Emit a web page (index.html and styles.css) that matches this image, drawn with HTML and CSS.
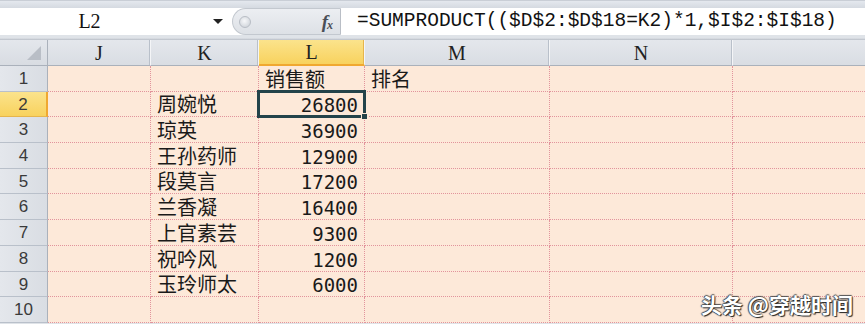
FILE: index.html
```
<!DOCTYPE html>
<html lang="zh-CN">
<head>
  <meta charset="UTF-8">
  <title>SUMPRODUCT 排名</title>
  <link rel="stylesheet" href="styles.css">
</head>
<body>
  <div class="window">
    <div class="top-strip"></div>

    <!-- 名称框 + 编辑栏 -->
    <div class="formula-bar">
      <div class="name-box">
        <span class="name">L2</span>
        <span class="arrow"></span>
      </div>
      <div class="fx-area">
        <span class="grip"></span>
        <span class="fx">f<sub>x</sub></span>
      </div>
      <div class="formula">=SUMPRODUCT(($D$2:$D$18=K2)*1,$I$2:$I$18)</div>
    </div>
    <div class="bar-gap"></div>

    <div class="sheet">
      <div class="corner"><span class="corner-tri"></span></div>
      <div class="col-head">J</div>
      <div class="col-head">K</div>
      <div class="col-head active">L</div>
      <div class="col-head">M</div>
      <div class="col-head">N</div>
      <div class="col-head last"></div>

      <div class="row-head">1</div>
      <div class="cell"></div>
      <div class="cell"></div>
      <div class="cell text">销售额</div>
      <div class="cell text">排名</div>
      <div class="cell"></div>
      <div class="cell last"></div>

      <div class="row-head active">2</div>
      <div class="cell"></div>
      <div class="cell text">周婉悦</div>
      <div class="cell num selected">26800<span class="handle"></span></div>
      <div class="cell"></div>
      <div class="cell"></div>
      <div class="cell last"></div>

      <div class="row-head">3</div>
      <div class="cell"></div>
      <div class="cell text">琼英</div>
      <div class="cell num">36900</div>
      <div class="cell"></div>
      <div class="cell"></div>
      <div class="cell last"></div>

      <div class="row-head">4</div>
      <div class="cell"></div>
      <div class="cell text">王孙药师</div>
      <div class="cell num">12900</div>
      <div class="cell"></div>
      <div class="cell"></div>
      <div class="cell last"></div>

      <div class="row-head">5</div>
      <div class="cell"></div>
      <div class="cell text">段莫言</div>
      <div class="cell num">17200</div>
      <div class="cell"></div>
      <div class="cell"></div>
      <div class="cell last"></div>

      <div class="row-head">6</div>
      <div class="cell"></div>
      <div class="cell text">兰香凝</div>
      <div class="cell num">16400</div>
      <div class="cell"></div>
      <div class="cell"></div>
      <div class="cell last"></div>

      <div class="row-head">7</div>
      <div class="cell"></div>
      <div class="cell text">上官素芸</div>
      <div class="cell num">9300</div>
      <div class="cell"></div>
      <div class="cell"></div>
      <div class="cell last"></div>

      <div class="row-head">8</div>
      <div class="cell"></div>
      <div class="cell text">祝吟风</div>
      <div class="cell num">1200</div>
      <div class="cell"></div>
      <div class="cell"></div>
      <div class="cell last"></div>

      <div class="row-head">9</div>
      <div class="cell"></div>
      <div class="cell text">玉玲师太</div>
      <div class="cell num">6000</div>
      <div class="cell"></div>
      <div class="cell"></div>
      <div class="cell last"></div>

      <div class="row-head">10</div>
      <div class="cell"></div>
      <div class="cell"></div>
      <div class="cell"></div>
      <div class="cell"></div>
      <div class="cell"></div>
      <div class="cell last"></div>
    </div>

    <!-- 水印 -->
    <div class="watermark">头条 @穿越时间</div>
  </div>
</body>
</html>
```
FILE: styles.css
```
* {
  margin: 0;
  padding: 0;
  box-sizing: border-box;
}

body {
  background-color: #dfe3e8;
  font-family: "Liberation Sans", Arial, sans-serif;
  overflow: hidden;
}

.window {
  position: relative;
  width: 865px;
  height: 324px;
  overflow: hidden;
}

.top-strip {
  height: 8px;
  background: linear-gradient(#e4e8ee, #d5dae1);
  border-top: 1px solid #c9ced6;
}

/* 编辑栏 */
.formula-bar {
  display: flex;
  height: 27px;
  background-color: #ffffff;
}

.name-box {
  width: 232px;
  display: flex;
  align-items: center;
}

.name {
  flex: 1;
  text-align: center;
  font-family: "Liberation Serif", serif;
  font-size: 20px;
  color: #111;
  padding-left: 6px;
}

.arrow {
  width: 0;
  height: 0;
  border-left: 5px solid transparent;
  border-right: 5px solid transparent;
  border-top: 5px solid #222;
  margin-right: 9px;
  margin-left: 40px;
}

.fx-area {
  width: 109px;
  display: flex;
  align-items: center;
  justify-content: space-between;
  background: linear-gradient(#eceef2, #dde1e6);
  border: 1px solid #c3c8cf;
  border-right: 1px solid #b9bec6;
  border-radius: 14px 0 0 14px;
  padding: 0 8px 0 6px;
}

.grip {
  width: 12px;
  height: 12px;
  border-radius: 50%;
  background: radial-gradient(circle at 45% 40%, #f7f8fa, #c7ccd3);
  border: 1px solid #b8bdc5;
}

.fx {
  font-family: "Liberation Serif", serif;
  font-style: italic;
  font-weight: bold;
  font-size: 19px;
  color: #4a4f57;
  letter-spacing: -1px;
}

.fx sub {
  font-size: 12px;
  vertical-align: -1px;
}

.formula {
  flex: 1;
  font-family: "Liberation Mono", monospace;
  font-size: 19.5px;
  color: #111;
  padding-left: 16px;
  line-height: 27px;
  white-space: nowrap;
}

.bar-gap {
  height: 5px;
  background: linear-gradient(#dfe3e8 60%, #b8bec7);
}

/* 表格 */
.sheet {
  display: grid;
  grid-template-columns: 48px 103px 108px 106px 185px 183px 1fr;
  grid-template-rows: 26px;
  grid-auto-rows: 25.7px;
  background-color: #fde9d9;
}

.corner {
  background: linear-gradient(#e4e7ec, #d8dce2);
  border-right: 1px solid #aab1bb;
  border-bottom: 1px solid #aab1bb;
  position: relative;
}

.corner-tri {
  position: absolute;
  right: 6px;
  bottom: 5px;
  width: 0;
  height: 0;
  border-left: 14px solid transparent;
  border-bottom: 14px solid #b9bec6;
}

.col-head {
  background: linear-gradient(#e4e7ec, #d9dde3);
  border-right: 1px solid #f4f5f7;
  border-bottom: 1px solid #aab1bb;
  box-shadow: inset -1px 0 0 #b9c0ca;
  text-align: center;
  font-family: "Liberation Serif", serif;
  font-size: 20px;
  line-height: 26px;
  color: #222;
}

.col-head.active {
  background: linear-gradient(#fbe38c, #f8d25e);
  border-bottom: 2px solid #f0a830;
  box-shadow: inset -1px 0 0 #e6b54c;
  line-height: 25px;
}

.col-head.last {
  border-right: none;
  box-shadow: none;
}

.row-head {
  background: linear-gradient(90deg, #e4e7ec, #d9dde3);
  border-right: 1px solid #aab1bb;
  border-bottom: 1px solid #b9c0ca;
  text-align: center;
  font-size: 17px;
  line-height: 25px;
  color: #3a3a3a;
}

.row-head.active {
  background: linear-gradient(#fbe38c, #f8d25e);
  border-right: 2px solid #f0a830;
  border-bottom: 1px solid #e6b54c;
}

.cell {
  border-right: 1px dotted #e2949c;
  border-bottom: 1px dotted #e2949c;
  display: flex;
  align-items: flex-end;
  color: #1a1a1a;
  white-space: nowrap;
}

.cell.last {
  border-right: none;
}

.text {
  font-family: "Noto Sans CJK SC", sans-serif;
  font-size: 20px;
  line-height: 22px;
  padding-left: 6px;
  padding-bottom: 1px;
}

.num {
  justify-content: flex-end;
  font-family: "DejaVu Sans Mono", monospace;
  font-size: 19px;
  line-height: 22px;
  padding-right: 6px;
}

/* 选中单元格 */
.selected {
  position: relative;
}

.selected::after {
  content: "";
  position: absolute;
  left: -2px;
  top: -2px;
  right: -2px;
  bottom: -2px;
  border: 3px solid #23434a;
}

.handle {
  position: absolute;
  right: -4px;
  bottom: -4px;
  width: 7px;
  height: 7px;
  background-color: #23434a;
  border: 1px solid #fde9d9;
  z-index: 1;
}

.watermark {
  position: absolute;
  right: 12px;
  bottom: 9px;
  font-family: "Noto Sans CJK SC", sans-serif;
  font-size: 21px;
  font-weight: bold;
  line-height: 22px;
  color: #ffffff;
  text-shadow: 1px 1px 1px #222, -1px 0 1px #444, 0 -1px 1px #555;
}
```
